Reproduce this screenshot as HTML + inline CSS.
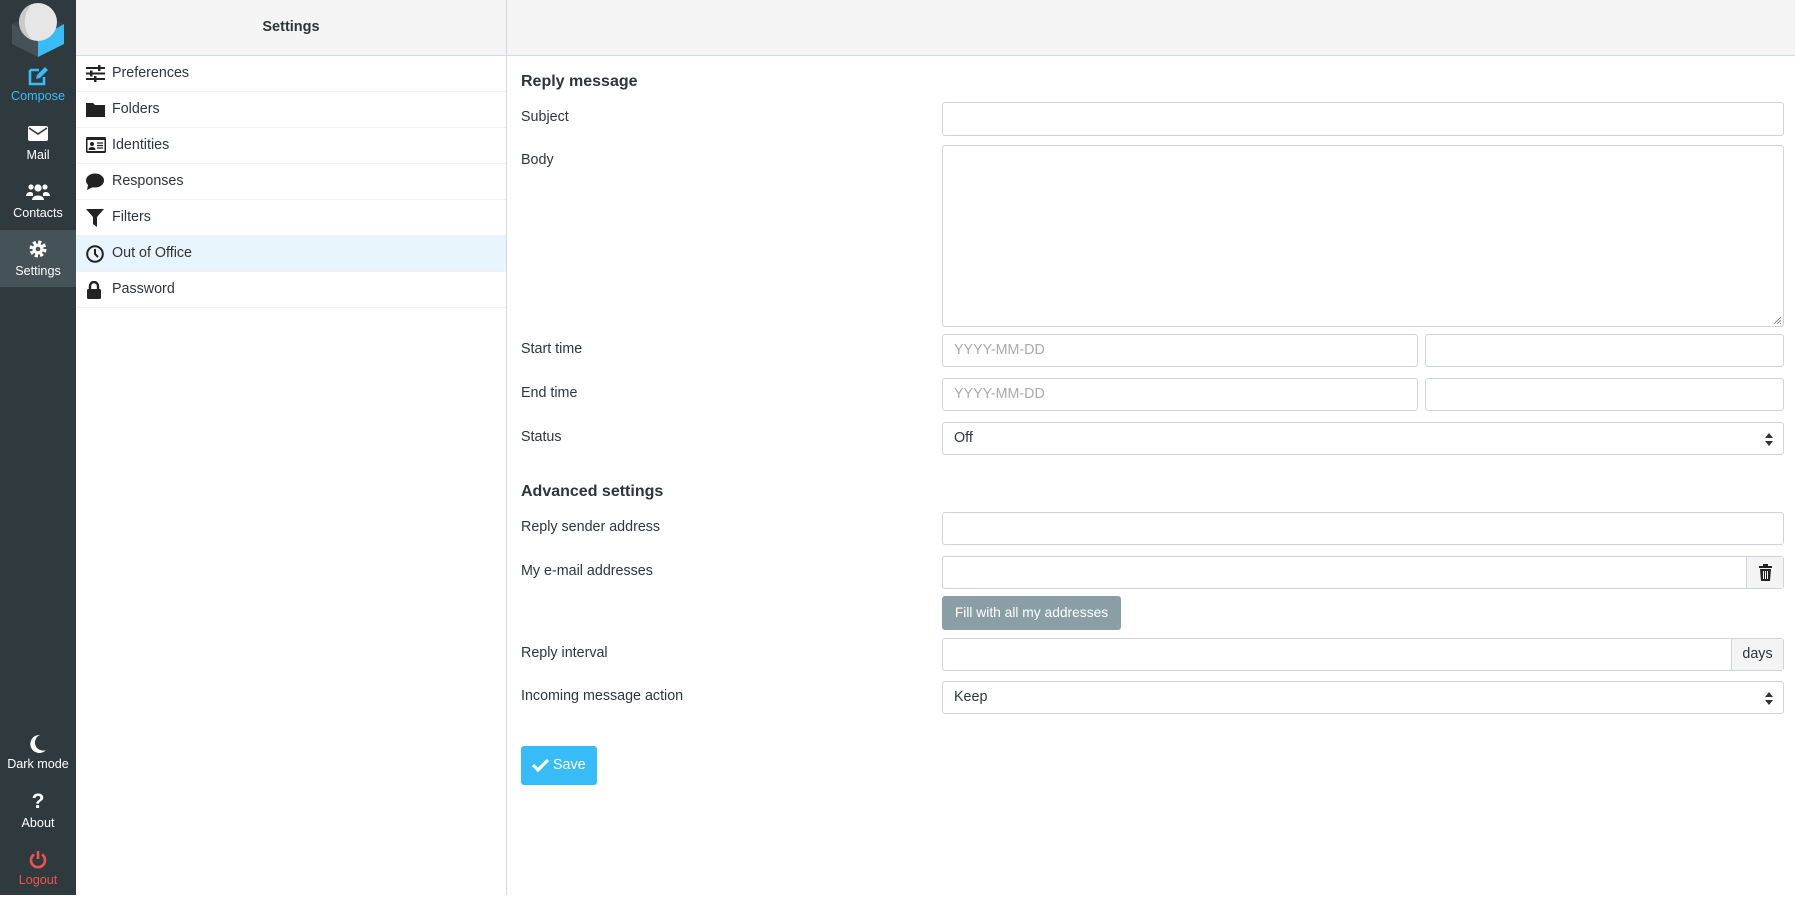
<!DOCTYPE html>
<html><head><meta charset="utf-8"><style>
*{box-sizing:border-box;margin:0;padding:0}
body{width:1795px;height:895px;overflow:hidden;font-family:"Liberation Sans",sans-serif;font-size:14.3px;color:#2c363a;background:#fff;position:relative}
.side{position:absolute;left:0;top:0;width:76px;height:895px;background:#2f3a3f}
.nav{position:absolute;left:0;width:76px;height:58px;text-align:center;color:#fff;font-size:12.6px}
.nav svg{display:block;margin:0 auto}
.nav span{position:absolute;left:0;right:0;display:block}
.list{position:absolute;left:76px;top:0;width:431px;height:895px;border-right:1px solid #d4dbde}
.lh{height:56px;background:#f4f4f4;border-bottom:1px solid #d4dbde;text-align:center;font-weight:bold;font-size:14.5px;line-height:54px}
.row{height:36px;border-bottom:1px solid #eef1f2;position:relative;font-size:14.3px;line-height:35px;padding-left:36px}
.row svg{position:absolute;left:10px;top:9px}
.row.act{background:#e9f5fc}
.top{position:absolute;left:507px;top:0;right:0;height:56px;background:#f4f4f4;border-bottom:1px solid #d4dbde}
.c{position:absolute}
.h{left:521px;font-weight:bold;font-size:16px}
.lb{left:521px;font-size:14.3px}
.in{position:absolute;border:1px solid #ced4da;border-radius:3px;background:#fff;font-size:14.3px;padding-left:11px;line-height:31px}
.ph{color:#aaa}
.sel::after{content:"";position:absolute;right:10px;top:10px;width:0;height:0;border:4px solid transparent;border-bottom:5px solid #333;border-top:none}
.sel::before{content:"";position:absolute;right:10px;top:18px;width:0;height:0;border:4px solid transparent;border-top:5px solid #333;border-bottom:none}
</style></head><body>
<div class="side">
 <svg style="position:absolute;left:10px;top:0" width="56" height="57" viewBox="0 0 56 57">
  <polygon points="2,24 28,38 28,57 2,44" fill="#455258"/>
  <polygon points="28,38 54,24 54,44 28,57" fill="#37bcf8"/>
  <polygon points="2,24 28,12 54,24 28,38" fill="#3a464c"/>
  <circle cx="28" cy="22" r="19" fill="#e6e6e6"/>
  <path d="M22 4 A19 19 0 0 0 22 40 A26 26 0 0 1 22 4z" fill="#c9c9c9"/>
 </svg>
 <div class="nav" style="top:57px;color:#37bcf8"><svg style="margin-top:9px" width="22" height="20" viewBox="0 0 22 20"><path d="M3 4h9M3 4v14h14v-7" stroke="#37bcf8" stroke-width="2.6" fill="none"/><path d="M9 13l1-4 8-8 3 3-8 8z" fill="#37bcf8"/></svg><span style="top:32px">Compose</span></div>
 <div class="nav" style="top:115px"><svg style="margin-top:11px" width="20" height="15" viewBox="0 0 20 15"><rect x="0" y="0" width="20" height="15" rx="2" fill="#fff"/><path d="M1 2l9 6 9-6" stroke="#2f3a3f" stroke-width="1.6" fill="none"/></svg><span style="top:33px">Mail</span></div>
 <div class="nav" style="top:172px"><svg style="margin-top:11px" width="24" height="17" viewBox="0 0 24 17"><circle cx="12" cy="5" r="3.6" fill="#fff"/><circle cx="5" cy="4" r="2.6" fill="#fff"/><circle cx="19" cy="4" r="2.6" fill="#fff"/><path d="M6 17c0-6 12-6 12 0z" fill="#fff"/><path d="M0 13c0-5 7-5 7-2v2z M24 13c0-5-7-5-7-2v2z" fill="#fff"/></svg><span style="top:34px">Contacts</span></div>
 <div class="nav" style="top:230px;background:#455258;height:57px"><svg style="margin-top:10px" width="18" height="18" viewBox="0 0 18 18"><circle cx="9" cy="9" r="6.5" fill="none" stroke="#fff" stroke-width="4" stroke-dasharray="3 2.1"/><circle cx="9" cy="9" r="5.5" fill="#fff"/><circle cx="9" cy="9" r="2.3" fill="#455258"/></svg><span style="top:34px">Settings</span></div>
 <div class="nav" style="top:730px"><svg style="margin-top:4px" width="18" height="19" viewBox="0 0 18 19"><path d="M11 1A9 9 0 1 0 17 16A7 7 0 0 1 11 1z" fill="#fff"/></svg><span style="top:27px">Dark mode</span></div>
 <div class="nav" style="top:788px"><div style="font-weight:bold;font-size:21px;line-height:24px;margin-top:2px">?</div><span style="top:28px">About</span></div>
 <div class="nav" style="top:846px;color:#ef5350"><svg style="margin-top:4px" width="18" height="19" viewBox="0 0 18 19"><path d="M5 4.5A7 7 0 1 0 13 4.5" stroke="#ef5350" stroke-width="2.6" fill="none"/><path d="M9 1v8" stroke="#ef5350" stroke-width="2.6"/></svg><span style="top:27px">Logout</span></div>
</div>
<div class="list">
 <div class="lh">Settings</div>
 <div class="row"><svg width="19" height="17" viewBox="0 0 19 17"><path d="M0 3h19M0 8.5h19M0 14h19" stroke="#222" stroke-width="2"/><rect x="12" y="0" width="2.5" height="6" fill="#222"/><rect x="4" y="5.5" width="2.5" height="6" fill="#222"/><rect x="8" y="11" width="2.5" height="6" fill="#222"/></svg>Preferences</div>
 <div class="row"><svg width="19" height="16" viewBox="0 0 19 16"><path d="M0 2h7l2 2h10v12H0z" fill="#222"/></svg>Folders</div>
 <div class="row"><svg width="20" height="16" viewBox="0 0 20 16"><rect width="20" height="16" rx="1.5" fill="#222"/><rect x="1.5" y="3" width="17" height="11" fill="#fff"/><circle cx="6" cy="7" r="2" fill="#222"/><path d="M2.5 13c0-4 7-4 7 0z" fill="#222"/><path d="M11 6h6M11 8.5h6M11 11h6" stroke="#222" stroke-width="1.3"/></svg>Identities</div>
 <div class="row"><svg width="18" height="17" viewBox="0 0 18 17"><ellipse cx="9" cy="7.5" rx="9" ry="7" fill="#222"/><path d="M2 12l-1 5 6-3z" fill="#222"/></svg>Responses</div>
 <div class="row"><svg width="18" height="18" viewBox="0 0 18 18"><path d="M0 0h18l-7 8v10l-4-3V8z" fill="#222"/></svg>Filters</div>
 <div class="row act"><svg width="18" height="18" viewBox="0 0 18 18"><circle cx="9" cy="9" r="7.8" fill="none" stroke="#222" stroke-width="2"/><path d="M9 4v5l3 3" stroke="#222" stroke-width="2" fill="none"/></svg>Out of Office</div>
 <div class="row"><svg width="16" height="18" viewBox="0 0 16 18"><path d="M4 8V5a4 4 0 0 1 8 0v3" stroke="#222" stroke-width="2.4" fill="none"/><rect x="1" y="8" width="14" height="10" rx="1.5" fill="#222"/></svg>Password</div>
</div>
<div class="top"></div>
<div class="c h" style="top:73px">Reply message</div>
<div class="c lb" style="top:109px">Subject</div>
<div class="in" style="left:942px;top:102px;width:842px;height:34px"></div>
<div class="c lb" style="top:152px">Body</div>
<div class="in" style="left:942px;top:145px;width:842px;height:182px"><svg style="position:absolute;right:2px;bottom:2px" width="8" height="8" viewBox="0 0 8 8"><path d="M8 1L1 8M8 4L4 8M8 7L7 8" stroke="#777" stroke-width="0.8"/></svg></div>
<div class="c lb" style="top:341px">Start time</div>
<div class="in ph" style="left:942px;top:334px;width:476px;height:33px">YYYY-MM-DD</div>
<div class="in" style="left:1425px;top:334px;width:359px;height:33px"></div>
<div class="c lb" style="top:385px">End time</div>
<div class="in ph" style="left:942px;top:378px;width:476px;height:33px">YYYY-MM-DD</div>
<div class="in" style="left:1425px;top:378px;width:359px;height:33px"></div>
<div class="c lb" style="top:429px">Status</div>
<div class="in sel" style="left:942px;top:422px;width:842px;height:33px">Off</div>
<div class="c h" style="top:483px">Advanced settings</div>
<div class="c lb" style="top:519px">Reply sender address</div>
<div class="in" style="left:942px;top:512px;width:842px;height:33px"></div>
<div class="c lb" style="top:563px">My e-mail addresses</div>
<div class="in" style="left:942px;top:556px;width:842px;height:33px"><div style="position:absolute;right:0;top:0;bottom:0;width:37px;background:#f4f4f4;border-left:1px solid #ced4da"><svg style="position:absolute;left:12px;top:7px" width="13" height="17" viewBox="0 0 13 17"><rect x="0" y="2" width="13" height="2" fill="#222"/><rect x="4" y="0" width="5" height="2" fill="#222"/><path d="M1 5h11l-1 12H2z" fill="#222"/><path d="M4.5 7v8M6.5 7v8M8.5 7v8" stroke="#f4f4f4" stroke-width="1"/></svg></div></div>
<div class="c" style="left:942px;top:596px;width:179px;height:34px;background:#8a9fa5;border-radius:3px;color:#fff;font-size:13.8px;line-height:34px;text-align:center">Fill with all my addresses</div>
<div class="c lb" style="top:645px">Reply interval</div>
<div class="in" style="left:942px;top:638px;width:842px;height:33px"><div style="position:absolute;right:0;top:0;bottom:0;width:52px;background:#f4f4f4;border-left:1px solid #ced4da;text-align:center;line-height:31px;padding:0">days</div></div>
<div class="c lb" style="top:688px">Incoming message action</div>
<div class="in sel" style="left:942px;top:681px;width:842px;height:33px">Keep</div>
<div class="c" style="left:521px;top:746px;width:76px;height:39px;background:#37bcf8;border-radius:3px;color:#fff;font-size:14.3px;line-height:39px;padding-left:32px"><svg style="position:absolute;left:11px;top:12px" width="17" height="14" viewBox="0 0 17 14"><path d="M1 7l5 5 10-10" stroke="#fff" stroke-width="3.2" fill="none"/></svg>Save</div>
</body></html>
